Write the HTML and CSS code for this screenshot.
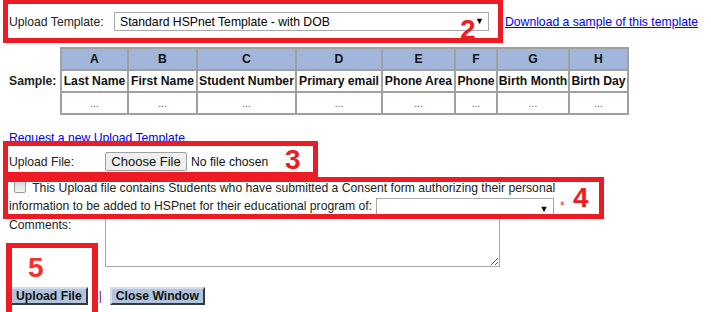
FILE: index.html
```html
<!DOCTYPE html>
<html lang="en">

<head>
    <meta charset="utf-8">
    <title>Upload Students</title>
    <link rel="stylesheet" href="styles.css">
</head>

<body>
    <div class="page">
        <div class="template-row">
            <label class="field-label wide">Upload Template:</label>
            <span class="select-wrap">
                <select class="template-select">
                    <option>Standard HSPnet Template - with DOB</option>
                </select>
            </span>
            <a href="#" class="link download-link">Download a sample of this template</a>
        </div>

        <div class="sample-row">
            <div class="sample-label">Sample:</div>
            <table class="sample-table">
                <tr class="letters">
                    <th>A</th><th>B</th><th>C</th><th>D</th><th>E</th><th>F</th><th>G</th><th>H</th>
                </tr>
                <tr class="names">
                    <th>Last Name</th><th>First Name</th><th>Student Number</th><th>Primary email</th>
                    <th>Phone Area</th><th>Phone</th><th>Birth Month</th><th>Birth Day</th>
                </tr>
                <tr class="dots">
                    <td>...</td><td>...</td><td>...</td><td>...</td><td>...</td><td>...</td><td>...</td><td>...</td>
                </tr>
            </table>
        </div>

        <a href="#" class="link request-link">Request a new Upload Template</a>

        <div class="file-row">
            <label class="field-label">Upload File:</label>
            <input type="file" class="file-input">
        </div>

        <div class="consent">
            <input type="checkbox" class="consent-check">
            This Upload file contains Students who have submitted a Consent form authorizing their personal
            information to be added to HSPnet for their educational program of:
            <span class="select-wrap small">
                <select class="program-select">
                    <option></option>
                </select>
            </span>
            <span class="required">*</span>
        </div>

        <div class="comments-row">
            <label class="field-label">Comments:</label>
            <textarea class="comments"></textarea>
        </div>

        <div class="actions">
            <button class="action-btn">Upload File</button>
            <span class="divider">|</span>
            <button class="action-btn">Close Window</button>
        </div>
    </div>

    <div class="mark mark-2"><span class="mark-num">2</span></div>
    <div class="mark mark-3"><span class="mark-num">3</span></div>
    <div class="mark mark-4"><span class="mark-num">4</span></div>
    <div class="mark mark-5"><span class="mark-num">5</span></div>
</body>

</html>
```

FILE: styles.css
```css
:root {
    --color-text: #222222;
    --color-link: #0000ee;
    --color-border: #a9a9a9;
    --color-grid: #a0a0a0;
    --color-head: #a2b6dc;
    --color-button: #b0c4de;
    --color-mark: #ed1c24;
    --font-main: "Liberation Sans", Arial, sans-serif;
    --font-size: 12.2px;
}

body {
    margin: 0;
    font-family: var(--font-main);
    font-size: var(--font-size);
    color: var(--color-text);
    background: #ffffff;
}

.page {
    padding: 12px 0 0 9px;
}

.field-label {
    display: inline-block;
    width: 96px;
    flex-shrink: 0;
}

.field-label.wide {
    width: 105px;
}

.link {
    color: var(--color-link);
    text-decoration: underline;
}

.template-row {
    display: flex;
    align-items: center;
    height: 19px;
}

.select-wrap {
    position: relative;
    display: inline-block;
}

.select-wrap::after {
    content: "\25BC";
    position: absolute;
    right: 5px;
    top: 4px;
    font-size: 9px;
    color: #000000;
    pointer-events: none;
}

.select-wrap.small::after {
    top: 3px;
}

.template-select,
.program-select {
    appearance: none;
    font-family: var(--font-main);
    font-size: var(--font-size);
    color: #000000;
    background: #ffffff;
    border: 1px solid var(--color-border);
    border-radius: 0;
    margin: 0;
    padding: 0 0 0 5px;
}

.template-select {
    width: 375px;
    height: 19px;
}

.download-link {
    margin-left: 16px;
}

.sample-row {
    display: flex;
    align-items: center;
    margin-top: 16px;
}

.sample-label {
    width: 51px;
    font-weight: bold;
}

.sample-table {
    table-layout: fixed;
    width: 569px;
    border: 1px solid var(--color-grid);
    border-spacing: 0;
    font-size: var(--font-size);
}

.sample-table th,
.sample-table td {
    border: 1px solid var(--color-grid);
    height: 18px;
    padding: 1px 2px;
    text-align: center;
    white-space: nowrap;
    overflow: hidden;
}

.sample-table .letters th:nth-child(1) { width: 61px; }
.sample-table .letters th:nth-child(2) { width: 63px; }
.sample-table .letters th:nth-child(3) { width: 93px; }
.sample-table .letters th:nth-child(4) { width: 80px; }
.sample-table .letters th:nth-child(5) { width: 67px; }
.sample-table .letters th:nth-child(6) { width: 36px; }
.sample-table .letters th:nth-child(7) { width: 66px; }
.sample-table .letters th:nth-child(8) { width: 53px; }

.sample-table .letters th {
    background: var(--color-head);
    color: #111111;
}

.sample-table .names th {
    color: #111111;
    padding: 1px 0;
}

.sample-table .dots td {
    font-size: 10px;
    color: #555555;
}

.request-link {
    display: block;
    margin-top: 16px;
    line-height: 15px;
}

.file-row {
    display: flex;
    align-items: center;
    margin-top: 6px;
    height: 19px;
}

.file-input {
    font-family: var(--font-main);
    font-size: var(--font-size);
    color: #111111;
}

.file-input::file-selector-button {
    font-family: var(--font-main);
    font-size: 13px;
    height: 19px;
    width: 82px;
    padding: 0;
    margin: 0 4px 0 0;
    background: #efefef;
    border: 1px solid #a0a0a0;
    border-radius: 2px;
    color: #111111;
}

.consent {
    margin-top: 8px;
    width: 580px;
    line-height: 18px;
}

.consent-check {
    appearance: none;
    width: 12px;
    height: 12px;
    margin: 0 3px 0 5px;
    vertical-align: -1px;
    border: 1px solid #9a9a9a;
    border-radius: 2px;
    background: linear-gradient(#d8d8d8, #f4f4f4);
}

.program-select {
    width: 178px;
    height: 17px;
    vertical-align: middle;
}

.required {
    color: #e8303a;
    margin-left: 3px;
    vertical-align: top;
    font-size: 12px;
}

.comments-row {
    display: flex;
    align-items: flex-start;
    margin-top: 3px;
}

.comments {
    width: 395px;
    height: 49px;
    box-sizing: border-box;
    border: 1px solid var(--color-border);
    margin: 0;
}

.actions {
    display: flex;
    align-items: center;
    margin-top: 20px;
    padding-left: 1px;
}

.action-btn {
    font-family: var(--font-main);
    font-size: var(--font-size);
    font-weight: bold;
    color: #111111;
    background: var(--color-button);
    border: 2px outset #d4dcea;
    border-right-color: #8c8c8c;
    border-bottom-color: #8c8c8c;
    height: 18px;
    padding: 0 4px;
    line-height: 14px;
}

.divider {
    color: #800080;
    margin: 0 8px 0 11px;
    font-size: 12px;
}

.mark {
    position: absolute;
    border: 5px solid var(--color-mark);
}

.mark-num {
    position: absolute;
    font-family: var(--font-main);
    font-weight: bold;
    font-size: 28px;
    line-height: 28px;
    color: var(--color-mark);
}

.mark-2 {
    left: 3px;
    top: -1px;
    width: 490px;
    height: 34px;
}

.mark-2 .mark-num {
    left: 452px;
    top: 12px;
}

.mark-3 {
    left: 3px;
    top: 141px;
    width: 305px;
    height: 26px;
}

.mark-3 .mark-num {
    left: 277px;
    top: 0;
}

.mark-4 {
    left: 3px;
    top: 177px;
    width: 591px;
    height: 32px;
}

.mark-4 .mark-num {
    left: 565px;
    top: 2px;
}

.mark-5 {
    left: 6px;
    top: 243px;
    width: 80px;
    height: 64px;
    border-width: 5px 6px;
}

.mark-5 .mark-num {
    left: 16px;
    top: 6px;
    color: #f2302c;
}
```
